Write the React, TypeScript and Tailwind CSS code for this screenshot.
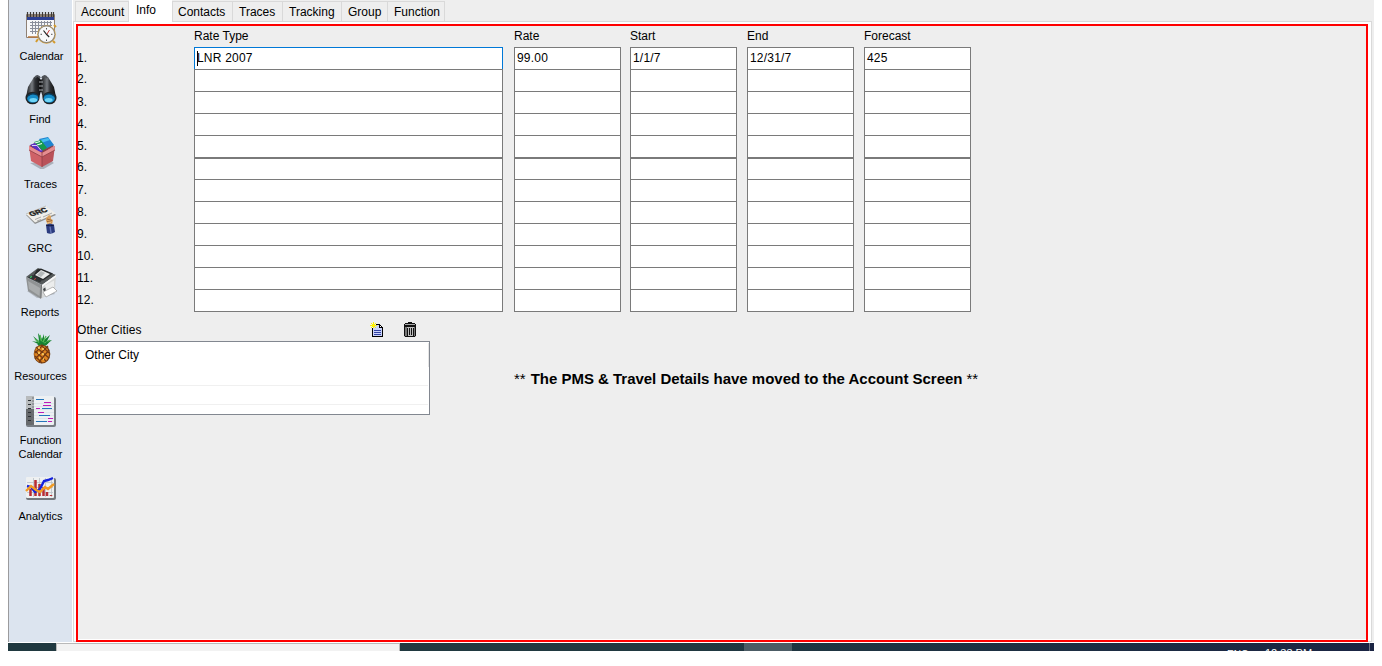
import type { ReactNode } from "react";

const CalendarIcon = () => (
  <svg width="32" height="32" viewBox="0 0 32 32">
    <rect x="1" y="2" width="29" height="24" rx="1" fill="#8f8175" />
    <rect x="2" y="5" width="27" height="20" fill="#f7f7f8" />
    <rect x="2" y="5" width="27" height="3" fill="#2c3f92" />
    <path d="M5 10.5h22M5 13.5h22M5 16.5h22M5 19.5h22M7.5 9v13M10.5 9v13M13.5 9v13M16.5 9v13M19.5 9v13M22.5 9v13M25.5 9v13" stroke="#8b8f9b" strokeWidth="1" />
    <path d="M2.5 0v5M5.5 0v5M8.5 0v5M11.5 0v5M14.5 0v5M17.5 0v5M20.5 0v5M23.5 0v5M26.5 0v5M28.5 0v5" stroke="#3d3935" strokeWidth="1.2" />
    <path d="M3 25h14" stroke="#b5763b" strokeWidth="1.5" />
    <path d="M29 13l2 2M13 27l-2 3M28 29l2 2" stroke="#d49b2e" strokeWidth="2" />
    <circle cx="21.5" cy="22.5" r="9.3" fill="#d8a037" />
    <circle cx="21.5" cy="22.3" r="8.7" fill="#8a877f" />
    <circle cx="21.5" cy="22.3" r="7.8" fill="#f8f8fa" />
    <path d="M21.5 16v1.5M21.5 27.5V29M15.5 22.3H17M26 22.3h1.5" stroke="#555" />
    <path d="M18.5 18.5l3.2 4 2.5 2.5" stroke="#222" strokeWidth="1.2" fill="none" />
    <path d="M22 22l2.5-4" stroke="#c93636" strokeWidth="1" />
  </svg>
);

const FindIcon = () => (
  <svg width="32" height="32" viewBox="0 0 32 32">
    <defs>
      <linearGradient id="barrel" x1="0" x2="1">
        <stop offset="0" stopColor="#17181a" />
        <stop offset=".4" stopColor="#777b80" />
        <stop offset=".6" stopColor="#303236" />
        <stop offset="1" stopColor="#0b0b0c" />
      </linearGradient>
    </defs>
    <path d="M13 6h6v12h-6z" fill="#3b3e42" />
    <path d="M9 3l4-1 3 4v11l-2 7-13-1 2-10z" fill="url(#barrel)" />
    <path d="M23 3l-4-1-3 4v11l2 7 13-1-2-10z" fill="url(#barrel)" />
    <path d="M10 4c2-3 4-2 5 0M17 4c1-2 3-3 5 0" stroke="#4e5257" strokeWidth="2" fill="none" />
    <path d="M14 8h4M14 12h4M14 16h4" stroke="#a5a9ae" />
    <ellipse cx="7.5" cy="24" rx="7" ry="6.3" fill="#202326" />
    <ellipse cx="24.5" cy="24" rx="7" ry="6.3" fill="#202326" />
    <ellipse cx="7.8" cy="24.4" rx="5.6" ry="4.4" fill="#168bc7" />
    <ellipse cx="24.2" cy="24.4" rx="5.6" ry="4.4" fill="#168bc7" />
    <ellipse cx="8.3" cy="26" rx="3.9" ry="2.1" fill="#6fd5f7" />
    <ellipse cx="23.7" cy="26" rx="3.9" ry="2.1" fill="#6fd5f7" />
    <path d="M3 22q4-4 9-1M20 21q5-3 9 1" stroke="#0c3b59" strokeWidth="1.4" fill="none" />
  </svg>
);

const TracesIcon = () => (
  <svg width="32" height="32" viewBox="0 0 32 32">
    <path d="M5 26l12 7 12-7-3-2z" fill="#aab0ba" />
    <path d="M4 9L20 1l9 8-12 8z" fill="#8d3f44" />
    <path d="M14 2l9-2 6 8-9 4z" fill="#1f84cf" />
    <path d="M15 3l8-2 2 2-9 3z" fill="#45bdf0" />
    <path d="M9 5l7-2 6 8-5 3z" fill="#169a4c" />
    <path d="M10 6l5-1.5M12 8l5-1.5" stroke="#e9fff0" strokeWidth="1.2" />
    <path d="M5 8l5-2 8 8-3 2z" fill="#5a30c4" />
    <path d="M7 8.5h5l4 5" stroke="#d8cdf7" fill="none" />
    <path d="M4 9l13 7v14L6 24z" fill="#cf6167" />
    <path d="M17 16l13-7-2 15-11 6z" fill="#b9525a" />
    <path d="M4 9l13 7 13-7v4l-13 7-13-7z" fill="#e58d91" />
    <path d="M4 13l13 7 13-7M17 16v14" stroke="#8f3d44" strokeWidth=".8" fill="none" />
  </svg>
);

const GrcIcon = () => (
  <svg width="32" height="32" viewBox="0 0 32 32">
    <path d="M1 10L22 2l9 8-21 9z" fill="#8f9090" />
    <path d="M1 9L21 1l10 7.5-21 9z" fill="#efeeea" />
    <path d="M1 9L21 1" stroke="#b9b9b5" strokeWidth=".8" />
    <g transform="translate(6 11.5) rotate(-17) skewX(20)">
      <text fontFamily="Liberation Sans, sans-serif" fontWeight="bold" fontSize="6.5" textLength="18" lengthAdjust="spacingAndGlyphs" fill="#1c1c1c" stroke="#1c1c1c" strokeWidth=".4">GRC</text>
    </g>
    <path d="M10 14.5l6-2.500M18 12l9-4M12 16l4-1.500" stroke="#999" strokeWidth=".8" />
    <path d="M21 13l3-3 2 1v3l2 1-1 5h-4l-2-4z" fill="#d9a25f" />
    <path d="M22 14l5 1.500M22 16.500l5 1" stroke="#8b552e" strokeWidth=".8" />
    <path d="M22.5 17h4v3h-4z" fill="#e7b979" />
    <path d="M21 20q4-3 8 0l1 7q-4 3-8 1z" fill="#2b3b7f" />
    <path d="M25 21l1 7" stroke="#6677b7" strokeWidth="1.4" />
    <path d="M21 20q4 2 8 0" stroke="#11183f" fill="none" />
  </svg>
);

const ReportsIcon = () => (
  <svg width="32" height="32" viewBox="0 0 32 32">
    <path d="M2 23l10 7 18-4-4-5z" fill="#b2b8c1" />
    <path d="M1 9L13 0l18 7-14 10z" fill="#55595a" />
    <path d="M1 9l16 8-1 14L3 23z" fill="#8f9293" />
    <path d="M3 13l12 7-.5 8L4 21z" fill="#a9acad" />
    <path d="M17 17L31 7l-1 15-14 9z" fill="#d5d7d7" />
    <path d="M12 1.500l4-1 12 5-10 7-10-4z" fill="#26292a" />
    <path d="M10 7l6-5 9 4-7 5z" fill="#e9ebeb" />
    <path d="M12 7l4-4 4 2-4 4z" fill="#b4b9ba" />
    <path d="M3 9.500l5-2.500 9 5-2 2.500z" fill="#303334" />
    <path d="M5 9.500l2-1" stroke="#39d56a" strokeWidth="1.3" />
    <path d="M9 11.500l2-1" stroke="#c94444" strokeWidth="1" />
    <path d="M17 17L31 7v2L17 19z" fill="#f7f7f7" />
    <path d="M18 21l11-7v6l-9 6z" fill="#3c4042" />
    <path d="M20 17.500l9-5v7l-8 4z" fill="#eceded" />
    <path d="M18 24l10-5 4 4-11 6z" fill="#fff" stroke="#999" strokeWidth=".7" />
    <path d="M16.500 17l-.5 13" stroke="#666" strokeWidth=".8" />
  </svg>
);

const ResourcesIcon = () => (
  <svg width="32" height="32" viewBox="0 0 32 32">
    <path d="M15 13L7 9l5 1-4-6 6 5-1-8 4 6 2-5v6l6-5-3 6 5-1-6 5z" fill="#168232" />
    <path d="M16 12L10 7M17 12l-2-9M17 12l4-8M18 12l7-4" stroke="#55b856" strokeWidth="1.4" />
    <ellipse cx="17" cy="22" rx="8.3" ry="9.5" fill="#743f16" />
    <ellipse cx="16.7" cy="22" rx="7.4" ry="8.6" fill="#df8521" />
    <path d="M10 19l11 10M11 15l13 11M16 13l8 8M10 24l7 7M24 18L14 30M23 14L10 27M18 13l-8 8" stroke="#743a13" strokeWidth="1.2" />
    <path d="M13 16h2M17 17h2M13 21h2M17 22h2M14 26h1M18 27h1" stroke="#ffd76b" strokeWidth="1.5" />
    <path d="M13 13l3-3 4 3M20 13l3-3" stroke="#168232" strokeWidth="2" fill="none" />
  </svg>
);

const FunctionIcon = () => (
  <svg width="32" height="32" viewBox="0 0 32 32">
    <rect x="1" y="1" width="30" height="30" rx="2" fill="#777d84" />
    <rect x="1" y="0" width="28" height="29" rx="1" fill="#edf0f3" />
    <rect x="1" y="0" width="8" height="29" fill="#b8bbbd" />
    <path d="M1 13h8v16H1z" fill="#66696c" />
    <path d="M3 4.500h3M3 8.500h3M3 12.500h3M3 16.500h3M3 20.500h3M3 24.500h3" stroke="#2d3135" strokeWidth="1" />
    <path d="M9 7.500h20M9 10.500h20M9 13.500h20M9 16.500h20M9 19.500h20M9 22.500h20M9 25.500h20" stroke="#d3dee5" strokeWidth=".6" />
    <path d="M11 3.500h8M12 12.500h3M17 12.500h10M14 19.500h11M11 25.500h11" stroke="#2475bb" strokeWidth="1.2" />
    <path d="M19 6.500h7M18 9.500h8M11 12.500h4M13 16.500h6M23 22.500h5M23 25.500h4" stroke="#bd1bb8" strokeWidth="1.2" />
    <path d="M8 1v28" stroke="#70757b" strokeWidth="1" strokeDasharray="2 1" />
  </svg>
);

const AnalyticsIcon = () => (
  <svg width="32" height="32" viewBox="0 0 32 32">
    <rect x="1" y="5" width="30" height="22" rx="2" fill="#73777c" />
    <rect x="1" y="4" width="28" height="21" rx="1" fill="#eef0f1" />
    <path d="M2 9.500h26M2 14.500h26M2 19.500h26M8.500 5v19M14.500 5v19M20.500 5v19M26.500 5v19" stroke="#b9c2c8" strokeWidth=".8" />
    <path d="M5.500 16v7M10.500 7v16M14.500 11v12M18.500 14v9M22 19v4M26 22v1" stroke="#b82d32" strokeWidth="2.5" />
    <path d="M2 13l4 1 4 5 5-3 4-8 4-1 5-2" stroke="#1422dc" strokeWidth="2.4" fill="none" />
    <path d="M1 18l5-5 5 4 4 2 5-5 3 2 6-5" stroke="#f29b24" strokeWidth="2.4" fill="none" />
  </svg>
);

type NavItem = { label: string; icon: ReactNode; box: string; gap: string };

const navItems: NavItem[] = [
  { label: "Calendar", icon: <CalendarIcon />, box: "pt-[12px]", gap: "mt-[5px] pl-[2px] tracking-[-0.1px]" },
  { label: "Find", icon: <FindIcon />, box: "pt-[11px]", gap: "mt-[6px] pr-px" },
  { label: "Traces", icon: <TracesIcon />, box: "pt-[11px]", gap: "mt-[8px]" },
  { label: "GRC", icon: <GrcIcon />, box: "pt-[14px]", gap: "mt-[4px] pr-px" },
  { label: "Reports", icon: <ReportsIcon />, box: "pt-[13px]", gap: "mt-[5px] pr-px" },
  { label: "Resources", icon: <ResourcesIcon />, box: "pt-[13px]", gap: "mt-[5px]" },
  { label: "Function Calendar", icon: <FunctionIcon />, box: "pt-[13px]", gap: "mt-[5px] w-[50px] tracking-[-0.1px]" },
  { label: "Analytics", icon: <AnalyticsIcon />, box: "pt-[12px]", gap: "mt-[4px]" },
];

const tabs = [
  { label: "Account", width: "w-[54px]" },
  { label: "Info", width: "w-[43px]", active: true },
  { label: "Contacts", width: "w-[61px]" },
  { label: "Traces", width: "w-[50px]" },
  { label: "Tracking", width: "w-[59px]" },
  { label: "Group", width: "w-[46px]" },
  { label: "Function", width: "w-[57px]" },
];

const columns = [
  { label: "Rate Type", value: "LNR 2007", width: "w-[309px]", gap: "ml-[116px]", focused: true },
  { label: "Rate", value: "99.00", width: "w-[107px]", gap: "ml-[11px]" },
  { label: "Start", value: "1/1/7", width: "w-[107px]", gap: "ml-[9px]" },
  { label: "End", value: "12/31/7", width: "w-[107px]", gap: "ml-[10px]" },
  { label: "Forecast", value: "425", width: "w-[107px]", gap: "ml-[10px]" },
];

const rows = Array.from({ length: 12 }, (_, i) => i);

function Sidebar() {
  return (
    <nav className="flex w-[64px] shrink-0 flex-col border-l border-[#9b9b9d] bg-[#dce4ef]">
      {navItems.map((item) => (
        <div key={item.label} className={`flex flex-col items-center ${item.box}`}>
          <div className="pl-px">{item.icon}</div>
          <div className={`text-center text-[11px] leading-[14px] ${item.gap}`}>{item.label}</div>
        </div>
      ))}
    </nav>
  );
}

function Tabs() {
  return (
    <div className="flex h-[21px] bg-[#eeeeee] pl-[2px]">
      {tabs.map((t, i) =>
        t.active ? (
          <div key={t.label} className={`z-10 h-[22px] bg-white pl-[7px] leading-[20px] ${t.width}`}>
            {t.label}
          </div>
        ) : (
          <div
            key={t.label}
            className={`mt-px h-[20px] border-t border-r border-[#d9d9d9] leading-[20px] ${i === 0 || i === 2 ? "border-l pl-[5px]" : "pl-[6px]"} ${t.width}`}
          >
            {t.label}
          </div>
        ),
      )}
    </div>
  );
}

function RateGrid() {
  return (
    <div className="flex">
      <div className="-ml-px flex w-px flex-col pt-[21px]">
        {rows.map((r) => (
          <div key={r} className={`h-[22px] leading-[22px] tracking-[0.1px] ${r === 1 || r === 5 ? "-mt-px mb-px" : ""}`}>
            {r + 1}.
          </div>
        ))}
      </div>
      {columns.map((c) => (
        <div key={c.label} className={`${c.width} ${c.gap}`}>
          <div className="h-[21px] leading-[20px]">{c.label}</div>
          <div className="h-[265px] border-b border-[#7a7a7a]">
            {rows.map((r) => (
              <div
                key={r}
                className={`flex h-[22px] items-start border-x bg-white pl-[2px] leading-[20px] tracking-[0.2px] ${
                  r === 5 ? "border-t-2" : "border-t"
                } ${r === 0 && c.focused ? "border-[#0078d7]" : "border-[#7a7a7a]"}`}
              >
                {r === 0 && c.focused && <span className="mt-[3px] -mr-px h-[15px] w-px bg-black" />}
                {r === 0 && c.value}
              </div>
            ))}
          </div>
        </div>
      ))}
    </div>
  );
}

const NewDocIcon = () => (
  <svg width="13" height="16" viewBox="0 0 13 16" shapeRendering="crispEdges">
    <path d="M2 6h1v9H2zM2 14h11v1H2zM6 2h4v1H6zM12 5h1v10h-1zM10 3h1v1h-1zM11 4h1v1h-1z" fill="#000" />
    <path d="M3 3h6v3h3v8H3z" fill="#c9d2fa" />
    <path d="M9 3h1v2h2v1H9z" fill="#000" />
    <path d="M10 4h1v1h-1z" fill="#fff" />
    <path d="M4 8h7v1H4zM4 10h7v1H4zM4 12h7v1H4z" fill="#3343a4" />
    <path d="M3 0h1v6H3zM0 3h7v1H0zM1 1h1v1H1zM5 1h1v1H5zM1 5h1v1H1zM5 5h1v1H5zM2 2h3v3H2z" fill="#fff200" />
  </svg>
);

const TrashIcon = () => (
  <svg width="14" height="16" viewBox="0 0 14 16" shapeRendering="crispEdges">
    <path d="M5 0h4v1h3v1h1v2H1V2h1V1h3z" fill="#111" />
    <path d="M2 2h10v1H2z" fill="#aaa" />
    <path d="M1 5h12v10H1z" fill="#bdbdbd" />
    <path d="M1 4h12v1H1zM1 5h1v9H1zM4 6h1v8H4zM6 6h1v7H6zM8 6h1v7H8zM10 6h1v8h-1zM12 5h1v9h-1zM2 14h10v1H2z" fill="#111" />
    <path d="M2 5h2v9H2zM11 5h1v9h-1z" fill="#777" />
  </svg>
);

function OtherCities() {
  return (
    <div className="flex">
      <div className="w-[352px]">
        <div className="flex h-[29px] pt-[10px]">
          <div className="-ml-px w-[293px] leading-[16px] tracking-[0.1px]">Other Cities</div>
          <NewDocIcon />
          <div className="ml-[20px]">
            <TrashIcon />
          </div>
        </div>
        <div className="h-[74px] border-y border-r border-[#828790] bg-white pt-px pl-px">
          <div className="flex h-[24px] w-[350px] items-center border-r border-[#e5e5e5] pl-[6px]">Other City</div>
          <div className="mr-px h-[19px] border-b border-[#f0f0f0]" />
          <div className="mr-px h-[19px] border-b border-[#f0f0f0]" />
        </div>
      </div>
      <div className="ml-[84px] pt-[57px] text-[15px] leading-[20px] font-bold whitespace-nowrap">
        <span className="font-normal">**</span>
        <span className="pr-[4px] pl-[5px] tracking-[-0.02px]">The PMS &amp; Travel Details have moved to the Account Screen</span>
        <span className="font-normal">**</span>
      </div>
    </div>
  );
}

function Taskbar() {
  return (
    <div className="flex h-[8px] overflow-hidden bg-linear-to-r from-[#203940] via-[#203840] to-[#1a2443] text-[11px] leading-[12px] text-white">
      <div className="ml-[48px] w-[344px] border-x border-t border-[#b9b9b9] bg-[#f2f2f2]" />
      <div className="ml-[344px] w-[48px] bg-[#4c5c65]" />
      <div className="ml-[435px] w-[38px] pt-[6px] text-[10px]">ENG</div>
      <div className="w-[104px] pt-[4px]">12:33 PM</div>
      <div className="w-px bg-[#707786]" />
    </div>
  );
}

export default function App() {
  return (
    <div className="h-[666px] w-[1382px] overflow-hidden bg-white pl-[8px] font-['Liberation_Sans',Arial,sans-serif] text-[12px] text-black">
      <div className="w-[1366px]">
        <div className="flex h-[642px]">
          <Sidebar />
          <main className="ml-px flex flex-1 flex-col bg-[#eeeeee]">
            <Tabs />
            <div className="mr-[2px] h-[621px] border border-[#d9d9d9] bg-white pt-[2px] pr-[3px] pl-[2px]">
              <div className="h-[618px] border-2 border-[#ff0000] bg-[#eeeeee] shadow-[inset_0_-1px_0_white]">
                <RateGrid />
                <OtherCities />
              </div>
            </div>
          </main>
        </div>
        <div className="h-px bg-white" />
        <Taskbar />
      </div>
    </div>
  );
}
